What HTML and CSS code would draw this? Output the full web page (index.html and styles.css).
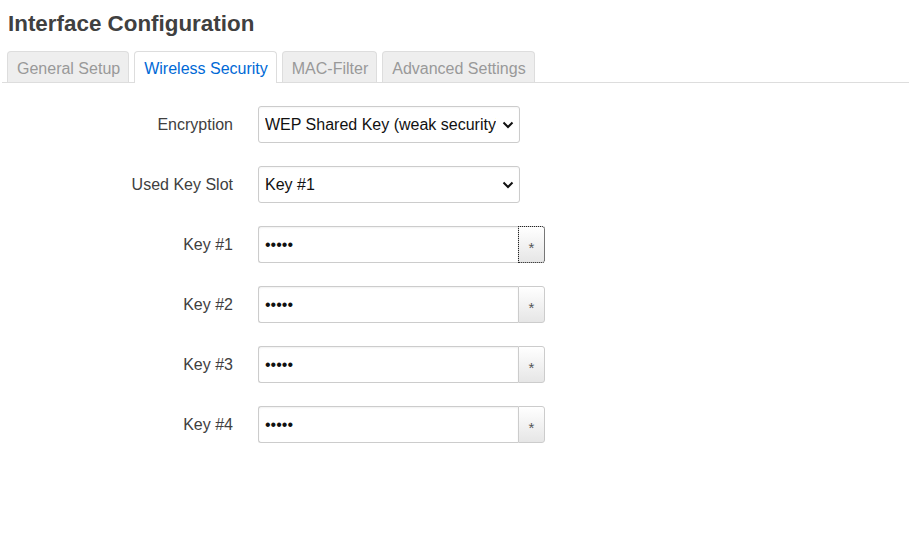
FILE: index.html
```html
<!DOCTYPE html>
<html>
<head>
<meta charset="utf-8">
<link rel="stylesheet" href="styles.css">
</head>
<body>
<div class="page">
  <h2 class="title">Interface Configuration</h2>
  <ul class="tabs">
    <li class="tab">General Setup</li>
    <li class="tab active">Wireless Security</li>
    <li class="tab">MAC-Filter</li>
    <li class="tab">Advanced Settings</li>
  </ul>
  <div class="form">
    <div class="row">
      <label class="label">Encryption</label>
      <div class="select">
        <span class="select-text">WEP Shared Key (weak security)</span>
        <svg class="chev" width="12" height="8" viewBox="0 0 12 8"><path d="M1.5 1.5 L6 6 L10.5 1.5" fill="none" stroke="#111" stroke-width="2"/></svg>
      </div>
    </div>
    <div class="row">
      <label class="label">Used Key Slot</label>
      <div class="select">
        <span class="select-text">Key #1</span>
        <svg class="chev" width="12" height="8" viewBox="0 0 12 8"><path d="M1.5 1.5 L6 6 L10.5 1.5" fill="none" stroke="#111" stroke-width="2"/></svg>
      </div>
    </div>
    <div class="row">
      <label class="label">Key #1</label>
      <div class="group">
        <input class="pw" type="password" value="*****">
        <button class="reveal focused">*</button>
      </div>
    </div>
    <div class="row">
      <label class="label">Key #2</label>
      <div class="group">
        <input class="pw" type="password" value="*****">
        <button class="reveal">*</button>
      </div>
    </div>
    <div class="row">
      <label class="label">Key #3</label>
      <div class="group">
        <input class="pw" type="password" value="*****">
        <button class="reveal">*</button>
      </div>
    </div>
    <div class="row">
      <label class="label">Key #4</label>
      <div class="group">
        <input class="pw" type="password" value="*****">
        <button class="reveal">*</button>
      </div>
    </div>
  </div>
</div>
</body>
</html>
```

FILE: styles.css
```css
html, body {
  margin: 0;
  padding: 0;
  background: #fff;
}
body {
  font-family: "Liberation Sans", Arial, sans-serif;
  font-size: 16px;
  color: #404040;
}
.page {
  padding: 0 8px;
}
.title {
  margin: 10px 0 0 0;
  font-size: 22.4px;
  line-height: 27px;
  font-weight: bold;
  color: #404040;
}
.tabs {
  list-style: none;
  display: flex;
  gap: 5px;
  margin: 14px -6px 0 -6px;
  padding: 0 0 0 5px;
  border-bottom: 1px solid #ddd;
}
.tab {
  padding: 7px 8px 3px 9px;
  line-height: 20px;
  border: 1px solid #ddd;
  border-bottom: none;
  border-radius: 4px 4px 0 0;
  background: #eee;
  color: #999;
}
.tab.active {
  background: #fff;
  color: #0069d6;
  margin-bottom: -1px;
  padding-bottom: 4px;
}
.form {
  display: flex;
  flex-direction: column;
  gap: 23px;
  padding-top: 23px;
}
.row {
  display: flex;
  align-items: center;
  gap: 25px;
}
.label {
  width: 225px;
  text-align: right;
  color: #404040;
}
.select {
  box-sizing: border-box;
  width: 262px;
  height: 37px;
  border: 1px solid #ccc;
  border-radius: 3px;
  display: flex;
  align-items: center;
  padding: 0 5px 0 6px;
  background: #fff;
  color: #111;
  box-shadow: inset 0 1px 2px rgba(0,0,0,0.04);
}
.select-text {
  flex: 1;
  overflow: hidden;
  white-space: nowrap;
  min-width: 0;
}
.chev {
  flex: none;
  margin-left: 6px;
}
.group {
  display: flex;
  height: 37px;
}
.pw {
  box-sizing: border-box;
  width: 260px;
  height: 37px;
  border: 1px solid #ccc;
  border-right: none;
  border-radius: 3px 0 0 3px;
  padding: 0 6px;
  font-family: "Liberation Sans", Arial, sans-serif;
  font-size: 16px;
  color: #111;
  margin: 0;
  box-shadow: inset 0 1px 2px rgba(0,0,0,0.06);
}
.reveal {
  box-sizing: border-box;
  width: 27px;
  height: 37px;
  margin: 0;
  border: 1px solid #ccc;
  border-radius: 0 3px 3px 0;
  background: linear-gradient(#fff, #e6e6e6);
  color: #555;
  font-family: "Liberation Sans", Arial, sans-serif;
  font-size: 15px;
  padding: 5px 0 0 0;
}
.reveal.focused {
  outline: 1px dotted #222;
  outline-offset: -1px;
}
```
